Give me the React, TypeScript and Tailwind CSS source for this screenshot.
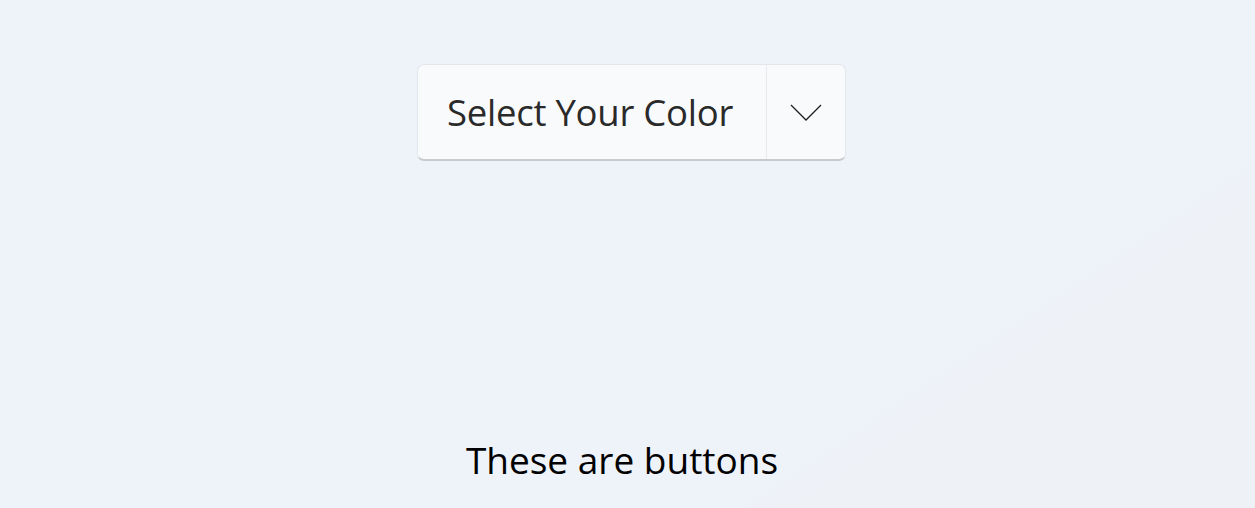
export default function App() {
  return (
    <div
      className="flex h-[508px] w-full flex-col items-center overflow-hidden bg-[linear-gradient(146deg,#eef3fa_0%,#eef3fa_73%,#eef1f6_77%,#eef1f6_100%)] pt-[64px]"
      style={{ fontFamily: '"Open Sans", "Noto Sans", sans-serif' }}
    >
      {/* Drop-down button */}
      <button
        type="button"
        className="ml-[8px] flex h-[97px] w-[429px] items-stretch rounded-[7px] border border-b-[2px] border-[#e3e6ea] border-b-[#c8cacd] bg-[#f9fafc] text-[#2a2a2a]"
      >
        <span className="flex flex-1 items-center pl-[29px] text-[36.5px] leading-none tracking-[-0.25px]">
          Select Your Color
        </span>
        <span className="w-px bg-[#e8eaee]" />
        <span className="flex w-[78px] items-center justify-center">
          <svg width="32" height="18" viewBox="0 0 32 18" fill="none" className="mt-[2px]">
            <path d="M1 1 L16 16 L31 1" stroke="#1e1e1e" strokeWidth="1.3" />
          </svg>
        </span>
      </button>

      <p className="mr-[11px] mt-[280px] text-[37px] leading-none text-black">These are buttons</p>
    </div>
  )
}
